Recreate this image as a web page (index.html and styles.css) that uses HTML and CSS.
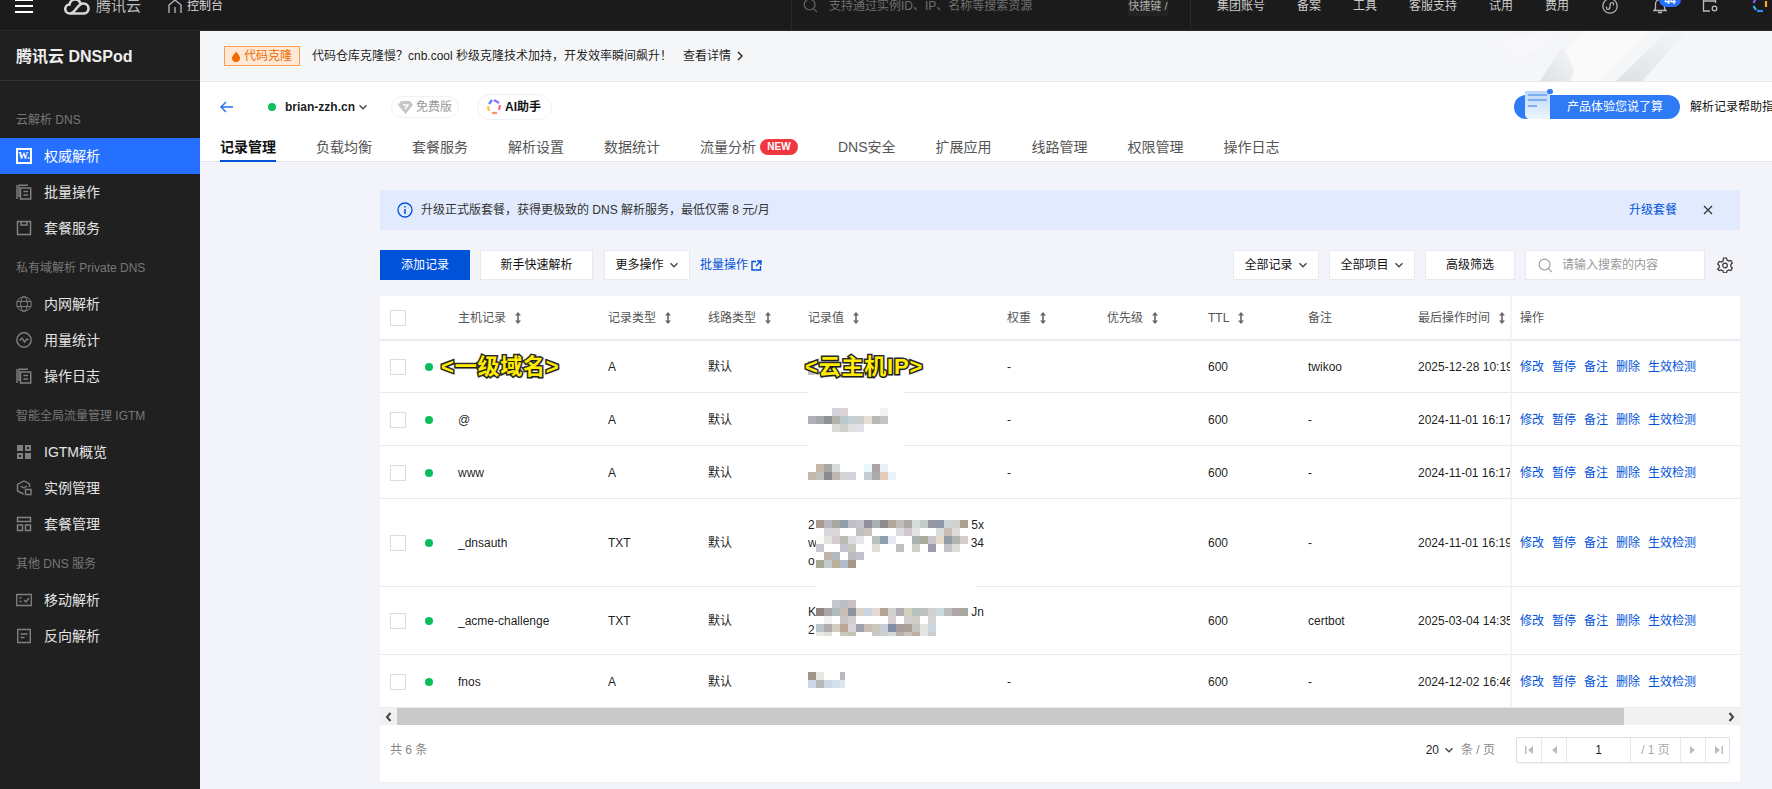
FILE: index.html
```html
<!DOCTYPE html>
<html lang="zh-CN">
<head>
<meta charset="utf-8">
<title>腾讯云 DNSPod</title>
<link rel="stylesheet" href="styles.css">
</head>
<body>
<svg class="defs" width="0" height="0" aria-hidden="true">
  <symbol id="sort" viewBox="0 0 8 12"><path d="M4 1v10" stroke="currentColor" stroke-width="1.6"/><path d="M4 0 7 3.6H1zM4 12 1 8.4h6z" fill="currentColor"/></symbol>
  <symbol id="chev" viewBox="0 0 10 10"><path d="M1.5 3.2 5 6.8l3.5-3.6" fill="none" stroke="currentColor" stroke-width="1.3"/></symbol>
  <symbol id="copydoc" viewBox="0 0 16 16"><path d="M3 13V1.2h9M1 1v14" fill="none" stroke="currentColor" stroke-width="1.4"/><path d="M4.5 4h10.2v11H4.500z M7.500 7.500h4.500M7.500 11h4.500" fill="none" stroke="currentColor" stroke-width="1.500"/></symbol>
</svg>

<header class="topbar">
  <svg class="burger" width="18" height="14" viewBox="0 0 18 14"><path d="M0 1h18M0 7h18M0 13h18" stroke="#fff" stroke-width="2"/></svg>
  <svg class="cloud" width="26" height="18" viewBox="0 0 26 18"><path d="M6 16.500h13.500a5 5 0 0 0 0-10c-3.500 0-5.500 3-7.500 5.500s-3.500 4.500-6 4.500a4.500 4.500 0 0 1-.5-9c.5-3 3-5 5.500-5 2.800 0 5 2 5.500 4.500" fill="none" stroke="#d8d8d8" stroke-width="2.600"/></svg>
  <span class="brand">腾讯云</span>
  <svg class="house" width="14" height="14" viewBox="0 0 14 14"><path d="M1 14V6l6-5 6 5v8M7 14V8" fill="none" stroke="#bbb" stroke-width="1.300"/></svg>
  <span class="console">控制台</span>
  <div class="tb-search">
    <svg width="15" height="15" viewBox="0 0 16 16"><circle cx="7" cy="7" r="5.800" fill="none" stroke="#666" stroke-width="1.300"/><path d="m11 11 4 4" stroke="#666" stroke-width="1.300"/></svg>
    <span>支持通过实例ID、IP、名称等搜索资源</span>
    <kbd class="tb-key">快捷键 /</kbd>
  </div>
  <nav class="tb-nav">
    <a>集团账号</a><a>备案</a><a>工具</a><a>客服支持</a><a>试用</a><a>费用</a>
  </nav>
  <div class="tb-icons">
    <svg width="16" height="16" viewBox="0 0 16 16"><circle cx="8" cy="8" r="7.200" fill="none" stroke="#bbb" stroke-width="1.200"/><path d="M6 11.500a1.500 1.500 0 0 1-1-2.700M6 11.500c1.500 0 2-1 2-3.500s.5-3.500 2-3.500a1.500 1.500 0 0 1 1 2.700" fill="none" stroke="#bbb" stroke-width="1.200"/></svg>
    <span class="bell">
      <svg width="16" height="16" viewBox="0 0 16 16"><path d="M2 12.500h12l-1.500-2V6a4.500 4.500 0 0 0-9 0v4.500zM6 14.500h4" fill="none" stroke="#bbb" stroke-width="1.300"/></svg>
      <b class="badge">44</b>
    </span>
    <svg width="16" height="16" viewBox="0 0 16 16"><path d="M8 13H1.500V-3h12v8M1.500 3h12" fill="none" stroke="#bbb" stroke-width="1.300"/><circle cx="12.500" cy="10.500" r="2.300" fill="none" stroke="#bbb" stroke-width="1.300"/></svg>
    <svg width="16" height="16" viewBox="0 0 16 16" fill="none" stroke-width="2.200"><path d="M5-2 1.500 5" stroke="#7a5cff"/><path d="M8-3l6 3" stroke="#ff5a7a"/><path d="M14 3v6" stroke="#ffa62b"/><path d="M11 13H5" stroke="#2f8cff"/><path d="M1.500 8 4 12" stroke="#2fb5ff"/></svg>
  </div>
</header>

<div class="layout">
  <aside class="side">
    <div class="side-title">腾讯云 DNSPod</div>
    <div class="side-sec first">云解析 DNS</div>
    <a class="side-item active"><span class="w-icon">W.</span>权威解析</a>
    <a class="side-item"><svg class="si" viewBox="0 0 16 16"><use href="#copydoc"/></svg>批量操作</a>
    <a class="side-item"><svg class="si" viewBox="0 0 16 16"><path d="M1.500 1.500h13v13h-13zM5 1.500v3.500h6V1.500" fill="none" stroke="currentColor" stroke-width="1.500"/></svg>套餐服务</a>
    <div class="side-sec">私有域解析 Private DNS</div>
    <a class="side-item"><svg class="si" viewBox="0 0 16 16" fill="none" stroke="currentColor" stroke-width="1"><circle cx="8" cy="8" r="7.300"/><ellipse cx="8" cy="8" rx="3.300" ry="7.300"/><path d="M1 5.500h14M1 10.500h14"/></svg>内网解析</a>
    <a class="side-item"><svg class="si" viewBox="0 0 16 16" fill="none" stroke="currentColor" stroke-width="1.400"><circle cx="8" cy="8" r="7.200"/><path d="M3.500 8.500 6 6l2.500 4L11 7l1.500 1"/></svg>用量统计</a>
    <a class="side-item"><svg class="si" viewBox="0 0 16 16"><use href="#copydoc"/></svg>操作日志</a>
    <div class="side-sec">智能全局流量管理 IGTM</div>
    <a class="side-item"><svg class="si" viewBox="0 0 16 16" fill="currentColor"><path d="M1 1h6v6H1zM9 1h6v6H9zm2 2v2h2V3zM1 9h6v6H1zm2 2v2h2v-2zM9 9h6v6H9z" fill-rule="evenodd"/></svg>IGTM概览</a>
    <a class="side-item"><svg class="si" viewBox="0 0 16 16" fill="none" stroke="currentColor" stroke-width="1.400"><path d="M7.500 14 1.500 11V4.500L8 1l5.500 3v3M4.500 6l3.500 2 3-2"/><path d="M9.500 9.500h5.500v5H9.500z"/></svg>实例管理</a>
    <a class="side-item"><svg class="si" viewBox="0 0 16 16" fill="none" stroke="currentColor" stroke-width="1.500"><path d="M1.500 1.500h13v4h-13zM1.500 9h5v5.500h-5zM9.500 9h5v5.500h-5z"/></svg>套餐管理</a>
    <div class="side-sec">其他 DNS 服务</div>
    <a class="side-item"><svg class="si" viewBox="0 0 16 16" fill="none" stroke="currentColor" stroke-width="1.300"><path d="M.7 2.500h14.600v11H.7zM3.500 6h2M3.500 9.500h2M8 8l2 2 3-4"/></svg>移动解析</a>
    <a class="side-item"><svg class="si" viewBox="0 0 16 16" fill="none" stroke="currentColor" stroke-width="1.400"><path d="M1.700 1.500h12.600v13H1.700zM4.500 6h7M4.500 9.500h4"/></svg>反向解析</a>
  </aside>

  <main class="main">
    <section class="promo">
      <span class="promo-tag"><svg width="8" height="11" viewBox="0 0 8 11"><path d="M4 0c.5 2 4 4 4 7a4 4 0 0 1-8 0c0-2 2-3 2-4 1 0 1.500-1 2-3z" fill="#f26a00"/></svg>代码克隆</span>
      <span class="promo-text">代码仓库克隆慢？cnb.cool 秒级克隆技术加持，开发效率瞬间飙升！</span>
      <a class="promo-link">查看详情<svg width="8" height="10" viewBox="0 0 8 10"><path d="m2 1 4 4-4 4" fill="none" stroke="#222" stroke-width="1.400"/></svg></a>
      <svg class="promo-art" width="272" height="50" viewBox="0 0 272 50"><defs><linearGradient id="g1" x1="0" y1="1" x2="1" y2="0"><stop offset="0" stop-color="#dfe0e3"/><stop offset="1" stop-color="#f5f6f8"/></linearGradient></defs><path d="M38 50 85 0h62L100 50z" fill="#fafafb"/><path d="M116 50 168 0h20l-46 50z" fill="url(#g1)"/><path d="M40 50 58 22l6-7 10 25-4 10z" fill="url(#g1)"/><path d="M0 10 50 0h10L20 30z" fill="#f8f8fa"/></svg>
    </section>

    <section class="head">
      <div class="head-row">
        <svg class="back" width="14" height="12" viewBox="0 0 14 12"><path d="M13 6H1.500M6 1 1 6l5 5" fill="none" stroke="#2b6cee" stroke-width="1.400"/></svg>
        <i class="dot domain-dot"></i>
        <strong class="domain">brian-zzh.cn</strong>
        <svg class="dom-chev" width="10" height="10"><use href="#chev"/></svg>
        <span class="pill free"><svg width="15" height="13" viewBox="0 0 15 13"><path d="M3 0h9l3 4-7.500 9L0 4z" fill="#c6c6c6"/><path d="M5 4h5L7 8" fill="none" stroke="#fff" stroke-width="1.400"/></svg>免费版</span>
        <span class="pill ai"><svg width="16" height="16" viewBox="0 0 16 16" fill="none" stroke-width="2.200"><path d="M6 1 3 5" stroke="#5b7cff"/><path d="M8 1l5 3" stroke="#8e6cff"/><path d="M14 6l-1 5" stroke="#ff6a88"/><path d="M11 14H6" stroke="#ff8f6a"/><path d="M2 7l1 5" stroke="#ffc24a"/></svg>AI助手</span>
        <span class="feedback">
          <svg class="paper" width="28" height="30" viewBox="0 0 28 30"><defs><linearGradient id="g2" x1="0" y1="0" x2="0" y2="1"><stop offset="0" stop-color="#bcd6fb"/><stop offset="1" stop-color="#eef5ff"/></linearGradient></defs><path d="M0 2h25v28H5c-3 0-5-2-5-5z" fill="url(#g2)"/><rect x="22" y="0" width="6" height="5" rx="2.500" fill="#2f7bf0"/><path d="M3 6h19M3 11h19M3 17h9" stroke="#7eaef2" stroke-width="2"/></svg>
          产品体验您说了算
        </span>
        <span class="help">解析记录帮助指引</span>
      </div>
      <nav class="tabs">
        <a class="tab current">记录管理</a><a class="tab">负载均衡</a><a class="tab">套餐服务</a><a class="tab">解析设置</a><a class="tab">数据统计</a>
        <a class="tab flow">流量分析<b class="new">NEW</b></a>
        <a class="tab">DNS安全</a><a class="tab">扩展应用</a><a class="tab">线路管理</a><a class="tab">权限管理</a><a class="tab">操作日志</a>
      </nav>
    </section>

    <section class="content">
      <div class="alert">
        <svg width="16" height="16" viewBox="0 0 16 16" fill="none" stroke="#0052d9"><circle cx="8" cy="8" r="7" stroke-width="1.300"/><path d="M8 7v5M8 4v1.600" stroke-width="1.500"/></svg>
        <span class="alert-text">升级正式版套餐，获得更极致的 DNS 解析服务，最低仅需 8 元/月</span>
        <a class="alert-link">升级套餐</a>
        <svg class="alert-x" width="10" height="10" viewBox="0 0 10 10"><path d="m1 1 8 8M9 1 1 9" stroke="#333" stroke-width="1.300"/></svg>
      </div>

      <div class="toolbar">
        <button class="btn primary">添加记录</button>
        <button class="btn quick">新手快速解析</button>
        <button class="btn more">更多操作<svg width="10" height="10"><use href="#chev"/></svg></button>
        <a class="bulk">批量操作<svg width="11" height="11" viewBox="0 0 11 11"><path d="M5 1.500H1v8.500h8.500V6M6 1h4v4M10 1 5 6" fill="none" stroke="#0052d9" stroke-width="1.400"/></svg></a>
        <div class="tool-right">
          <button class="btn sel">全部记录<svg width="10" height="10"><use href="#chev"/></svg></button>
          <button class="btn sel">全部项目<svg width="10" height="10"><use href="#chev"/></svg></button>
          <button class="btn adv">高级筛选</button>
          <div class="search">
            <svg width="15" height="15" viewBox="0 0 16 16"><circle cx="7" cy="7" r="5.800" fill="none" stroke="#999" stroke-width="1.200"/><path d="m11 11 4 4" stroke="#999" stroke-width="1.200"/></svg>
            <span>请输入搜索的内容</span>
          </div>
          <svg class="gear" width="16" height="16" viewBox="0 0 16 16" fill="none" stroke="#333" stroke-width="1.200"><path d="m6.500 1h3l.5 2 1.800 1 2-.6 1.500 2.600-1.500 1.500v1.900l1.500 1.500-1.500 2.600-2-.6-1.800 1-.5 2h-3l-.5-2-1.800-1-2 .6L.7 11.900l1.500-1.500V8.500L.7 7l1.500-2.600 2 .6 1.800-1z"/><circle cx="8" cy="8.500" r="2.300"/></svg>
        </div>
      </div>

      <div class="card">
        <div class="scroller">
          <table class="records">
            <colgroup><col class="c-check"><col class="c-dot"><col class="c-host"><col class="c-type"><col class="c-line"><col class="c-val"><col class="c-w"><col class="c-pri"><col class="c-ttl"><col class="c-note"><col class="c-time"><col class="c-op"></colgroup>
            <thead>
              <tr>
                <th class="check"><i class="box"></i></th><th></th>
                <th>主机记录<svg class="sort"><use href="#sort"/></svg></th>
                <th>记录类型<svg class="sort"><use href="#sort"/></svg></th>
                <th>线路类型<svg class="sort"><use href="#sort"/></svg></th>
                <th>记录值<svg class="sort"><use href="#sort"/></svg></th>
                <th>权重<svg class="sort"><use href="#sort"/></svg></th>
                <th>优先级<svg class="sort"><use href="#sort"/></svg></th>
                <th>TTL<svg class="sort"><use href="#sort"/></svg></th>
                <th>备注</th>
                <th>最后操作时间<svg class="sort"><use href="#sort"/></svg></th>
                <th class="op">操作</th>
              </tr>
            </thead>
            <tbody>
              <tr class="r-first">
                <td class="check"><i class="box"></i></td><td class="dotc"><i class="dot"></i></td>
                <td class="anchor"><span class="mark mark-host">&lt;一级域名&gt;</span></td><td>A</td><td>默认</td>
                <td class="anchor">
                  <svg class="mosaic" width="96" height="52"><rect x="0" y="20" class="h14" fill="#c0c0c0"/></svg>
                  <span class="mark mark-val">&lt;云主机IP&gt;</span>
                </td>
                <td>-</td><td></td><td>600</td><td>twikoo</td><td><span class="time">2025-12-28 10:19:32</span></td>
                <td class="op"><a>修改</a><a>暂停</a><a>备注</a><a>删除</a><a>生效检测</a></td>
              </tr>
              <tr class="r-std">
                <td class="check"><i class="box"></i></td><td class="dotc"><i class="dot"></i></td>
                <td>@</td><td>A</td><td>默认</td>
                <td class="anchor">
                  <svg class="mosaic" width="96" height="53"><rect class="patch" x="0" y="-6"/>
                    <rect x="24" y="15" fill="#d4d4dc"/><rect x="32" y="15" fill="#dcd4d4"/><rect x="72" y="15" fill="#f2f2f2"/>
                    <rect x="0" y="23" fill="#b0b0b8"/><rect x="8" y="23" fill="#a5a8a8"/><rect x="16" y="23" fill="#8f8f94"/><rect x="24" y="23" fill="#b2b2a8"/><rect x="32" y="23" fill="#bcc8d0"/><rect x="40" y="23" fill="#c4d0d4"/><rect x="48" y="23" fill="#cccccc"/><rect x="56" y="23" fill="#e8dfd4"/><rect x="64" y="23" fill="#b8b8b8"/><rect x="72" y="23" fill="#c4c4c4"/>
                    <rect x="24" y="31" fill="#dadada"/><rect x="32" y="31" fill="#cfcfcc"/><rect x="40" y="31" fill="#e0e0e0"/><rect x="48" y="31" fill="#e0e0e8"/></svg>
                </td>
                <td>-</td><td></td><td>600</td><td>-</td><td><span class="time">2024-11-01 16:17:24</span></td>
                <td class="op"><a>修改</a><a>暂停</a><a>备注</a><a>删除</a><a>生效检测</a></td>
              </tr>
              <tr class="r-std">
                <td class="check"><i class="box"></i></td><td class="dotc"><i class="dot"></i></td>
                <td>www</td><td>A</td><td>默认</td>
                <td class="anchor">
                  <svg class="mosaic" width="96" height="53"><rect class="patch" x="0" y="-6"/>
                    <rect x="8" y="18" fill="#c8b8a8"/><rect x="16" y="18" fill="#a8a8a8"/><rect x="24" y="18" fill="#d8dcd8"/><rect x="56" y="18" fill="#e8f8fc"/><rect x="64" y="18" fill="#aca4a4"/><rect x="72" y="18" fill="#e8f0f8"/>
                    <rect x="0" y="26" fill="#c4b8ac"/><rect x="8" y="26" fill="#c0c0bc"/><rect x="16" y="26" fill="#8c8c90"/><rect x="24" y="26" fill="#c0b8b0"/><rect x="32" y="26" fill="#d4d4d4"/><rect x="40" y="26" fill="#d4d4dc"/><rect x="56" y="26" fill="#c4ccd4"/><rect x="64" y="26" fill="#acacac"/><rect x="72" y="26" fill="#e4ccb8"/><rect x="80" y="26" fill="#e8f2fa"/></svg>
                </td>
                <td>-</td><td></td><td>600</td><td>-</td><td><span class="time">2024-11-01 16:17:24</span></td>
                <td class="op"><a>修改</a><a>暂停</a><a>备注</a><a>删除</a><a>生效检测</a></td>
              </tr>
              <tr class="r-txt3">
                <td class="check"><i class="box"></i></td><td class="dotc"><i class="dot"></i></td>
                <td>_dnsauth</td><td>TXT</td><td>默认</td>
                <td class="anchor">
                  <div class="val"><div class="val-line"><span>2</span><span>5x</span></div><div class="val-line"><span>w</span><span>34</span></div><div class="val-line"><span>o</span></div></div>
                  <svg class="mosaic" width="176" height="88">
                    <rect x="8" y="21" fill="#a89c90"/><rect x="16" y="21" fill="#b8b8c4"/><rect x="24" y="21" fill="#a8a89c"/><rect x="32" y="21" fill="#90a0ac"/><rect x="40" y="21" fill="#c0c0c4"/><rect x="48" y="21" fill="#c4c4cc"/><rect x="56" y="21" fill="#90909c"/><rect x="64" y="21" fill="#a8b0b0"/><rect x="72" y="21" fill="#908c90"/><rect x="80" y="21" fill="#b4a89c"/><rect x="88" y="21" fill="#c0bcb8"/><rect x="96" y="21" fill="#aca8a8"/><rect x="104" y="21" fill="#d4dcdc"/><rect x="112" y="21" fill="#c8ccc8"/><rect x="120" y="21" fill="#9898a4"/><rect x="128" y="21" fill="#8c9aa8"/><rect x="136" y="21" fill="#ccd4d8"/><rect x="144" y="21" fill="#d4d0cc"/><rect x="152" y="21" fill="#aca090"/>
                    <rect x="16" y="29" fill="#d8d8dc"/><rect x="24" y="29" fill="#dcd8d8"/><rect x="48" y="29" fill="#c0c0c0"/><rect x="56" y="29" fill="#ccc4bc"/><rect x="88" y="29" fill="#d8dce0"/><rect x="96" y="29" fill="#d0c8cc"/><rect x="104" y="29" fill="#e4e4e4"/><rect x="128" y="29" fill="#d8dcdc"/><rect x="136" y="29" fill="#c8bcb4"/><rect x="144" y="29" fill="#dcdcd8"/>
                    <rect x="8" y="37" fill="#fafaf4"/><rect x="16" y="37" fill="#e4e4e0"/><rect x="24" y="37" fill="#d4ccd0"/><rect x="32" y="37" fill="#bcbcb4"/><rect x="40" y="37" fill="#dcdce0"/><rect x="48" y="37" fill="#e8e8ec"/><rect x="64" y="37" fill="#b8c0c0"/><rect x="72" y="37" fill="#90a0b0"/><rect x="80" y="37" fill="#e8e8f4"/><rect x="104" y="37" fill="#a8b0b0"/><rect x="112" y="37" fill="#a8ac98"/><rect x="120" y="37" fill="#c8c8cc"/><rect x="128" y="37" fill="#e4dcc8"/><rect x="136" y="37" fill="#909ca8"/><rect x="144" y="37" fill="#b0b4ac"/><rect x="152" y="37" fill="#d4ccc8"/>
                    <rect x="8" y="45" fill="#c8c8d0"/><rect x="32" y="45" fill="#c4c4d0"/><rect x="40" y="45" fill="#c8c8c0"/><rect x="64" y="45" fill="#e0dcd8"/><rect x="88" y="45" fill="#c0c0c0"/><rect x="104" y="45" fill="#d0d0c8"/><rect x="120" y="45" fill="#9c9cac"/><rect x="136" y="45" fill="#c4c4c8"/><rect x="144" y="45" fill="#dcdcd8"/>
                    <rect x="16" y="53" fill="#c0b4ac"/><rect x="24" y="53" fill="#b0bac0"/><rect x="40" y="53" fill="#bcbcbc"/><rect x="48" y="53" fill="#c0c0cc"/>
                    <rect x="8" y="61" fill="#a8a890"/><rect x="16" y="61" fill="#c4ccd0"/><rect x="24" y="61" fill="#bcb09c"/><rect x="32" y="61" fill="#b0bccc"/><rect x="40" y="61" fill="#a89888"/></svg>
                </td>
                <td></td><td></td><td>600</td><td>-</td><td><span class="time">2024-11-01 16:19:05</span></td>
                <td class="op"><a>修改</a><a>暂停</a><a>备注</a><a>删除</a><a>生效检测</a></td>
              </tr>
              <tr class="r-txt2">
                <td class="check"><i class="box"></i></td><td class="dotc"><i class="dot"></i></td>
                <td>_acme-challenge</td><td>TXT</td><td>默认</td>
                <td class="anchor">
                  <div class="val"><div class="val-line"><span>K</span><span>Jn</span></div><div class="val-line"><span>2</span></div></div>
                  <svg class="mosaic" width="176" height="68"><rect class="patch wide" x="8" y="-6"/>
                    <rect x="24" y="13" fill="#c4c8d0"/><rect x="32" y="13" fill="#bcbcc4"/><rect x="40" y="13" fill="#c8c0c4"/>
                    <rect x="8" y="21" fill="#908480"/><rect x="16" y="21" fill="#a8a8a8"/><rect x="24" y="21" fill="#b0bcc0"/><rect x="32" y="21" fill="#c8bcb4"/><rect x="40" y="21" fill="#8c94a0"/><rect x="48" y="21" fill="#dcd4c8"/><rect x="56" y="21" fill="#c8d4e4"/><rect x="64" y="21" fill="#e4d8d0"/><rect x="72" y="21" fill="#b4a494"/><rect x="80" y="21" fill="#d0d0d0"/><rect x="88" y="21" fill="#b0aeb4"/><rect x="96" y="21" fill="#d4d0c0"/><rect x="104" y="21" fill="#b4c4bc"/><rect x="112" y="21" fill="#c0c0c0"/><rect x="120" y="21" fill="#d0d0d0"/><rect x="128" y="21" fill="#ccdcdc"/><rect x="136" y="21" fill="#bcbcbc"/><rect x="144" y="21" fill="#b0a8a8"/><rect x="152" y="21" fill="#a8a8a0"/>
                    <rect x="16" y="29" fill="#f0f0f0"/><rect x="32" y="29" fill="#c8c4c8"/><rect x="40" y="29" fill="#d0ccd0"/><rect x="80" y="29" fill="#d8d0d4"/><rect x="96" y="29" fill="#d0ccd0"/><rect x="104" y="29" fill="#d0ccc8"/><rect x="120" y="29" fill="#d4d4d4"/>
                    <rect x="8" y="37" fill="#b8c4cc"/><rect x="16" y="37" fill="#b0acac"/><rect x="24" y="37" fill="#d0ccc0"/><rect x="32" y="37" fill="#bca894"/><rect x="40" y="37" fill="#d8d4d8"/><rect x="48" y="37" fill="#a0a0b0"/><rect x="56" y="37" fill="#c8bcb4"/><rect x="64" y="37" fill="#c8c8c0"/><rect x="72" y="37" fill="#c8ccd4"/><rect x="80" y="37" fill="#8090a4"/><rect x="88" y="37" fill="#a89c9c"/><rect x="96" y="37" fill="#a8a094"/><rect x="104" y="37" fill="#c4c4c0"/><rect x="112" y="37" fill="#e4e4e4"/><rect x="120" y="37" fill="#ccd8e0"/>
                    <rect class="h4" x="8" y="45" fill="#e8e8e4"/><rect class="h4" x="16" y="45" fill="#e0e0dc"/><rect class="h4" x="32" y="45" fill="#c8c8bc"/><rect class="h4" x="40" y="45" fill="#c4c4b4"/><rect class="h4" x="64" y="45" fill="#c4cac8"/><rect class="h4" x="72" y="45" fill="#c8d0d0"/><rect class="h4" x="80" y="45" fill="#d8d8d8"/><rect class="h4" x="88" y="45" fill="#b8b0b0"/><rect class="h4" x="96" y="45" fill="#c4c4bc"/><rect class="h4" x="104" y="45" fill="#bcb0a4"/><rect class="h4" x="112" y="45" fill="#e4e4e4"/><rect class="h4" x="120" y="45" fill="#d0ccc8"/></svg>
                </td>
                <td></td><td></td><td>600</td><td>certbot</td><td><span class="time">2025-03-04 14:35:12</span></td>
                <td class="op"><a>修改</a><a>暂停</a><a>备注</a><a>删除</a><a>生效检测</a></td>
              </tr>
              <tr class="r-std">
                <td class="check"><i class="box"></i></td><td class="dotc"><i class="dot"></i></td>
                <td>fnos</td><td>A</td><td>默认</td>
                <td class="anchor">
                  <svg class="mosaic" width="96" height="53">
                    <rect x="0" y="17" fill="#a09488"/><rect x="8" y="17" fill="#e8e8e4"/><rect class="w5" x="32" y="17" fill="#b8b8c0"/>
                    <rect x="0" y="25" fill="#ccd8e8"/><rect x="8" y="25" fill="#b8b8b4"/><rect x="16" y="25" fill="#ccd8e4"/><rect x="24" y="25" fill="#d4dfec"/><rect class="w5" x="32" y="25" fill="#dce6f0"/></svg>
                </td>
                <td>-</td><td></td><td>600</td><td>-</td><td><span class="time">2024-12-02 16:46:51</span></td>
                <td class="op"><a>修改</a><a>暂停</a><a>备注</a><a>删除</a><a>生效检测</a></td>
              </tr>
            </tbody>
          </table>
        </div>
        <div class="hscroll">
          <span class="hs-btn"><svg width="7" height="10" viewBox="0 0 7 10"><path d="M5.500 1 2 5l3.500 4" fill="none" stroke="#444" stroke-width="2"/></svg></span>
          <span class="hs-thumb"></span>
          <span class="hs-track"></span>
          <span class="hs-btn"><svg width="7" height="10" viewBox="0 0 7 10"><path d="M1.500 1 5 5 1.500 9" fill="none" stroke="#444" stroke-width="2"/></svg></span>
        </div>
        <footer class="pager-row">
          <span class="total">共 6 条</span>
          <span class="size">20<svg width="10" height="10"><use href="#chev"/></svg></span>
          <span class="size-unit">条 / 页</span>
          <div class="pager">
            <span class="pg"><svg width="8" height="10" viewBox="0 0 8 10"><path d="M0 1h1.500v8H0zM8 1v8L3 5z" fill="#bbb"/></svg></span>
            <span class="pg"><svg width="6" height="10" viewBox="0 0 6 10"><path d="M6 1v8L1 5z" fill="#bbb"/></svg></span>
            <span class="pg pg-input">1</span>
            <span class="pg pg-count">/ 1 页</span>
            <span class="pg"><svg width="6" height="10" viewBox="0 0 6 10"><path d="M0 1v8l5-4z" fill="#bbb"/></svg></span>
            <span class="pg"><svg width="8" height="10" viewBox="0 0 8 10"><path d="M6.500 1H8v8H6.500zM0 1v8l5-4z" fill="#bbb"/></svg></span>
          </div>
        </footer>
      </div>
    </section>
  </main>
</div>
</body>
</html>
```
FILE: styles.css
```css
* { box-sizing: border-box; }
html, body { margin: 0; height: 789px; overflow: hidden; }
body {
  display: flex;
  flex-direction: column;
  font: 12px/18px "Liberation Sans", "Noto Sans CJK SC", sans-serif;
  color: rgba(0, 0, 0, .9);
  background: #f3f4f9;
}
a { color: inherit; text-decoration: none; }
i, b { font-style: normal; }
.defs { position: absolute; }

/* top bar */
.topbar {
  flex: none;
  display: flex;
  align-items: center;
  height: 31px;
  padding: 0 4px 19px 15px;
  background: #1b1b1b;
  color: #ccc;
  border-bottom: 1px solid #2a2a2a;
  overflow: hidden;
}
.burger { flex: none; }
.cloud { flex: none; margin-left: 31px; }
.brand { margin-left: 6px; font-size: 15px; color: #bbb; white-space: nowrap; }
.house { flex: none; margin-left: 27px; }
.console { margin-left: 5px; color: #ddd; white-space: nowrap; }
.tb-search {
  display: flex;
  align-items: center;
  width: 400px;
  height: 60px;
  margin-left: auto;
  padding-left: 11px;
  flex: none;
  color: #6f6f6f;
  border-left: 1px solid #2a2a2a;
  border-right: 1px solid #2a2a2a;
}
.tb-search span { margin-left: 11px; white-space: nowrap; }
.tb-key {
  margin-left: auto;
  margin-right: 22px;
  padding: 2px 0;
  width: 40px;
  text-align: center;
  font: 11px/16px "Liberation Sans", "Noto Sans CJK SC", sans-serif;
  color: #aaa;
  background: #232323;
  white-space: nowrap;
}
.tb-nav { display: flex; gap: 32px; margin-left: 26px; flex: none; white-space: nowrap; }
.tb-icons { display: flex; align-items: center; gap: 34px; margin-left: 33px; flex: none; }
.tb-icons svg { display: block; overflow: visible; }
.bell { position: relative; display: block; width: 16px; height: 16px; }
.badge {
  position: absolute;
  left: 7px;
  top: -6px;
  width: 22px;
  height: 15px;
  border-radius: 8px;
  background: #2670ff;
  color: #fff;
  font-size: 10px;
  line-height: 18px;
  text-align: center;
  overflow: hidden;
}

/* layout */
.layout { flex: 1; display: flex; min-height: 0; }

/* sidebar */
.side { flex: none; width: 200px; background: #202020; color: #e4e4e4; font-size: 14px; }
.side-title {
  height: 50px;
  padding-left: 16px;
  line-height: 51px;
  font-size: 16px;
  font-weight: 700;
  color: #eee;
  border-bottom: 1px solid #333;
  white-space: nowrap;
}
.side-sec {
  height: 40px;
  padding: 13px 0 0 16px;
  font-size: 12px;
  line-height: 18px;
  color: #777;
  white-space: nowrap;
}
.side-sec.first { height: 57px; padding-top: 30px; }
.side-item { display: flex; align-items: center; gap: 12px; height: 36px; padding-left: 16px; line-height: 20px; }
.side-item.active { background: #2670ff; color: #fff; }
.si { flex: none; width: 16px; height: 16px; color: #808080; }
.w-icon {
  flex: none;
  width: 16px;
  height: 16px;
  border: 2px solid #fff;
  font: 700 10px/12px "Liberation Serif", serif;
  text-align: center;
  color: #fff;
}

/* promo */
.promo {
  position: relative;
  flex: none;
  display: flex;
  align-items: center;
  height: 51px;
  padding-left: 24px;
  background: #f5f6f8;
  border-bottom: 1px solid #e8e9ec;
  overflow: hidden;
  white-space: nowrap;
}
.promo-tag {
  display: flex;
  align-items: center;
  justify-content: center;
  gap: 4px;
  width: 76px;
  height: 20px;
  background: #ffe9d6;
  border: 1px solid #ff9d50;
  color: #ee6a00;
}
.promo-text { margin-left: 12px; }
.promo-link { display: flex; align-items: center; gap: 5px; margin-left: 11px; }
.promo-art { position: absolute; right: 0; top: 0; }

/* page head */
.main { flex: 1; min-width: 0; display: flex; flex-direction: column; overflow: hidden; }
.head { flex: none; background: #fff; padding-left: 20px; }
.head-row { display: flex; align-items: center; height: 50px; white-space: nowrap; }
.back { flex: none; }
.dot { display: block; width: 8px; height: 8px; border-radius: 50%; background: #0abf5b; }
.domain-dot { flex: none; margin-left: 34px; }
.domain { margin-left: 9px; font-size: 12px; }
.dom-chev { flex: none; margin-left: 3px; color: #444; }
.pill {
  display: flex;
  align-items: center;
  gap: 3px;
  border-radius: 13px;
  border: 1px solid #f0f1f4;
  background: #fff;
  flex: none;
}
.free { width: 68px; height: 22px; margin-left: 23px; padding-left: 6px; color: #999; }
.ai { width: 75px; height: 26px; margin-left: 18px; padding-left: 8px; font-weight: 700; gap: 3px; color: #111; }
.feedback {
  position: relative;
  flex: none;
  width: 166px;
  height: 24px;
  margin-left: auto;
  padding-left: 53px;
  line-height: 24px;
  border-radius: 12px;
  background: #2f7bf6;
  color: #fff;
}
.paper { position: absolute; left: 11px; bottom: 0; }
.help { flex: none; width: 82px; margin-left: 10px; overflow: hidden; color: #111; }
.tabs {
  display: flex;
  gap: 40px;
  height: 30px;
  border-bottom: 1px solid #e5e7eb;
  margin-left: -20px;
  padding-left: 20px;
  font-size: 14px;
  color: #555;
  white-space: nowrap;
}
.tab { height: 30px; line-height: 30px; display: flex; }
.tab.current { color: #111; font-weight: 700; border-bottom: 2px solid #0052d9; }
.new {
  margin: 7px 0 0 4px;
  width: 38px;
  height: 16px;
  border-radius: 8px;
  background: #f0363f;
  color: #fff;
  font-size: 10px;
  line-height: 16px;
  text-align: center;
}

/* content */
.content { flex: 1; padding: 28px 32px 0 180px; min-height: 0; }
.alert {
  display: flex;
  align-items: center;
  height: 40px;
  padding: 0 27px 0 17px;
  background: #e2ebfd;
  margin-bottom: 20px;
}
.alert svg { flex: none; }
.alert-text { margin-left: 8px; color: #333; }
.alert-link { margin-left: auto; color: #0052d9; }
.alert-x { margin-left: 26px; }
.toolbar { display: flex; align-items: center; height: 30px; margin-bottom: 16px; }
.btn {
  display: flex;
  align-items: center;
  justify-content: center;
  height: 30px;
  padding: 0;
  background: #fff;
  border: 1px solid #e8e9ee;
  font: inherit;
  color: #111;
  white-space: nowrap;
}
.btn svg { flex: none; margin-left: 5px; color: #444; }
.primary { width: 90px; background: #0052d9; border-color: #0052d9; color: #fff; }
.quick { width: 113px; margin-left: 10px; }
.more { width: 86px; margin-left: 11px; }
.bulk { display: flex; align-items: center; gap: 3px; margin-left: 10px; color: #0052d9; }
.tool-right { display: flex; align-items: center; gap: 10px; margin-left: auto; padding-right: 7px; }
.sel { width: 86px; }
.adv { width: 90px; }
.search {
  display: flex;
  align-items: center;
  gap: 9px;
  width: 180px;
  height: 30px;
  padding-left: 12px;
  background: #fff;
  border: 1px solid #e8e9ee;
  color: #999;
}
.gear { flex: none; margin-left: 2px; }

/* table */
.card { background: #fff; height: 486px; box-shadow: 0 1px 2px rgba(0, 0, 0, .03); }
.scroller { height: 412px; overflow: hidden; }
.records { width: 1508px; table-layout: fixed; border-collapse: separate; border-spacing: 0; }
.c-check { width: 40px; }
.c-dot { width: 28px; }
.c-host { width: 150px; }
.c-type, .c-line, .c-w, .c-ttl { width: 100px; }
.c-val { width: 199px; }
.c-pri { width: 101px; }
.c-note { width: 110px; }
.c-time { width: 250px; }
.c-op { width: 230px; }
.records th, .records td {
  padding: 0 0 0 10px;
  text-align: left;
  white-space: nowrap;
  background: #fff;
  border-bottom: 1px solid #e9eaee;
}
.records th { height: 45px; font-weight: 400; color: #555; border-bottom-width: 2px; }
.r-first td { height: 52px; }
.records .r-std td { height: 53px; padding-top: 1px; }
.r-txt3 td { height: 88px; }
.r-txt2 td { height: 68px; }
.box { display: block; width: 16px; height: 16px; border: 1px solid #dcdcdc; background: #fff; }
.records .dotc { padding-left: 5px; }
.sort { width: 8px; height: 12px; margin-left: 8px; color: #666; vertical-align: -2px; }
.time { display: block; width: 92px; overflow: hidden; }
.records .op {
  position: sticky;
  right: 0;
  padding-left: 8px;
  border-left: 2px solid #f3f4f8;
  color: #0052d9;
  z-index: 3;
}
.records th.op { color: #555; }
.op a { margin-right: 8px; }
.anchor { position: relative; }
.mosaic { position: absolute; left: 10px; top: 0; overflow: visible; }
.mosaic rect { width: 8px; height: 8px; }
.mosaic .patch { width: 96px; height: 12px; fill: #fff; }
.mosaic .wide { width: 160px; }
.mosaic .h4 { height: 4px; }
.mosaic .h14 { width: 7px; height: 14px; }
.mosaic .w5 { width: 5px; }
.val { width: 176px; }
.val-line { display: flex; justify-content: space-between; }
.mark {
  position: absolute;
  top: 50%;
  z-index: 2;
  transform: translateY(-50%);
  font-size: 22px;
  line-height: 28px;
  font-weight: 700;
  letter-spacing: .8px;
  color: #ffec00;
  -webkit-text-stroke: 3px #2b2b2b;
  paint-order: stroke fill;
  text-shadow: 1px 1px 2px rgba(0, 0, 0, .45);
}
.mark-host { left: -7px; }
.mark-val { left: 7px; }

/* scrollbar */
.hscroll { display: flex; height: 17px; background: #f1f1f1; }
.hs-btn { flex: none; display: flex; align-items: center; justify-content: center; width: 17px; }
.hs-thumb { flex: none; width: 1227px; background: #c9c9c9; }
.hs-track { flex: 1; }

/* pager */
.pager-row { display: flex; align-items: center; height: 57px; padding: 0 10px 8px; }
.total { color: #888; }
.size { display: flex; align-items: center; gap: 5px; margin-left: auto; }
.size svg { color: #444; }
.size-unit { margin-left: 7px; color: #888; }
.pager {
  display: flex;
  height: 26px;
  width: 214px;
  margin-left: 21px;
  border: 1px solid #dcdfe6;
  border-radius: 2px;
  box-shadow: 0 1px 1px rgba(0, 0, 0, .04);
}
.pg {
  flex: none;
  display: flex;
  align-items: center;
  justify-content: center;
  width: 25px;
  border-right: 1px solid #e7e8ec;
}
.pg:last-child { border-right: 0; }
.pg-input { width: 64px; }
.pg-count { width: 50px; color: #aaa; }
```
